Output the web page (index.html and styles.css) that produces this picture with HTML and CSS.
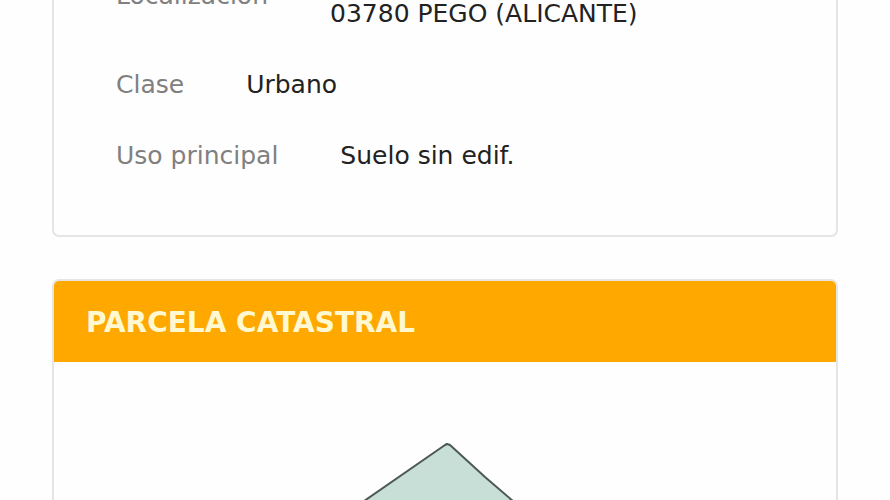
FILE: index.html
```html
<!DOCTYPE html>
<html lang="es">
<head>
    <meta charset="UTF-8">
    <meta name="viewport" content="width=device-width, initial-scale=1.0">
    <title>Parcela catastral</title>
    <link rel="stylesheet" href="styles.css">
</head>
<body>
    <main class="page">
        <section class="card card-scrolled">
            <dl class="data-list">
                <div class="data-row">
                    <dt>Localización</dt>
                    <dd><br>03780 PEGO (ALICANTE)</dd>
                </div>
                <div class="data-row">
                    <dt>Clase</dt>
                    <dd>Urbano</dd>
                </div>
                <div class="data-row">
                    <dt>Uso principal</dt>
                    <dd>Suelo sin edif.</dd>
                </div>
            </dl>
        </section>

        <section class="card">
            <h2 class="card-title">PARCELA CATASTRAL</h2>
            <div class="parcel-map">
                <svg class="parcel" width="300" height="200" viewBox="0 0 300 200" aria-hidden="true">
                    <path d="M150 3 L46 75 L10 100 L130 198 L290 125 L226 66 L190 35 L155 3 L152 2 Z" fill="#c7dfd7" stroke="#4c5854" stroke-width="2" stroke-linejoin="round"/>
                </svg>
            </div>
        </section>
    </main>
</body>
</html>
```
FILE: styles.css
```css
* {
    box-sizing: border-box;
}

body {
    margin: 0;
    height: 100vh;
    overflow: hidden;
    background-color: #fefefe;
    font-family: Verdana, "DejaVu Sans", sans-serif;
    font-size: 25px;
    line-height: 36px;
    color: #222;
}

.page {
    display: flex;
    flex-direction: column;
    gap: 42px;
    padding: 0 52px;
}

/* Cards */
.card {
    background-color: #fefefe;
    border: 2px solid #e5e5e5;
    border-radius: 7px;
}

.card-scrolled {
    margin-top: -105px;
}

.card-title {
    margin: 0;
    padding: 24px 32px 21px;
    background-color: #ffa800;
    border-radius: 5px 5px 0 0;
    color: #fff8d0;
    font-size: 28px;
    line-height: 36px;
}

/* Property data */
.data-list {
    display: flex;
    flex-direction: column;
    gap: 35px;
    margin: 0;
    padding: 63px 62px 61px;
}

.data-row {
    display: flex;
    align-items: center;
    gap: 62px;
}

dt {
    color: #808080;
}

dd {
    margin: 0;
}

/* Parcel drawing */
.parcel-map {
    display: flex;
    justify-content: center;
    padding: 80px 0;
}
```
